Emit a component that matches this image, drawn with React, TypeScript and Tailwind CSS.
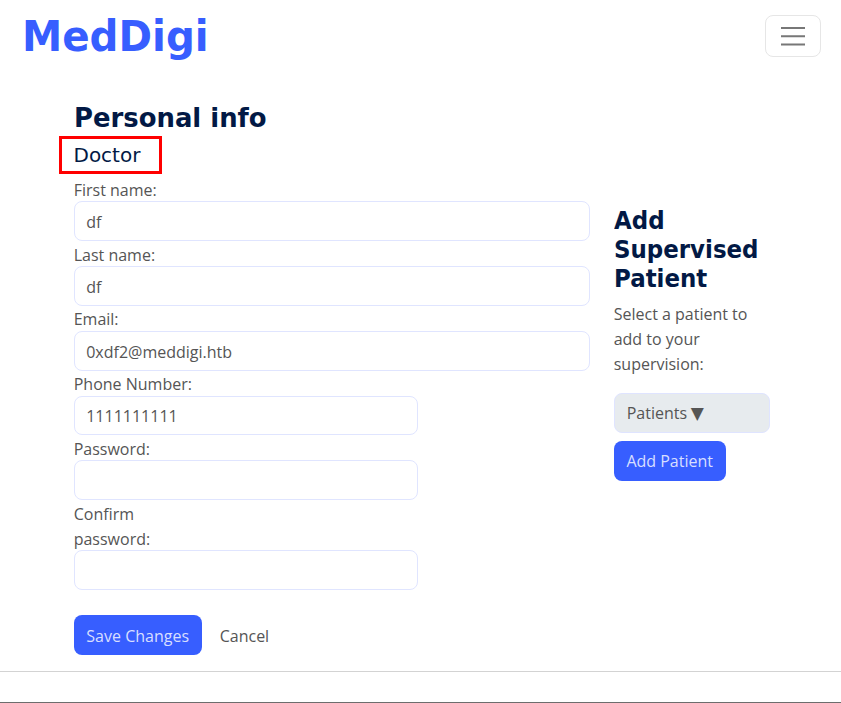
const heading = "font-['DejaVu_Sans',sans-serif] text-[#021945]";
const box = "block h-[39.8px] rounded-lg border border-[#e0e5ff] bg-white px-[11.5px] pt-[2px] outline-none";

function Field({ label, value = "", narrow = false, wrap = false, type = "text" }: {
  label: string; value?: string; narrow?: boolean; wrap?: boolean; type?: string;
}) {
  return (
    <label className="block">
      <span className={wrap ? "-mb-[1.5px] block w-[100px] pt-[1.5px]" : "-mb-[1.5px] block pt-[1.5px]"}>{label}</span>
      <input type={type} defaultValue={value} className={`${box} ${narrow ? "w-[344px]" : "w-full"}`} />
    </label>
  );
}

export default function App() {
  return (
    <div className="h-[703px] overflow-hidden bg-white font-['Open_Sans','Noto_Sans',sans-serif] text-[16px] leading-[24.95px] text-[#555] flex flex-col border-b border-[#6d6d6d]">
      <header className="flex h-[72px] shrink-0 items-center justify-between pl-[21.5px] pr-5">
        <a className="origin-left scale-x-[0.962] pt-px font-['DejaVu_Sans',sans-serif] text-[42px] leading-[50px] font-bold text-[#375eff]">MedDigi</a>
        <button aria-label="Menu" className="flex h-[42px] w-14 items-center justify-center rounded-lg border border-[#e6e6e6]">
          <svg width="24" height="20" viewBox="0 0 24 20" stroke="#777" strokeWidth="2">
            <path d="M0 2H24M0 10.2H24M0 18.4H24" />
          </svg>
        </button>
      </header>
      <main className="flex h-[599px] shrink-0 pl-[73.7px] pt-[29px]">
        <form className="w-[516px]">
          <h1 className={`${heading} h-[33px] origin-left scale-x-[0.945] text-[27.4px] leading-[33px] font-bold whitespace-nowrap`}>Personal info</h1>
          <div className="-ml-[14.4px] mt-[1.5px] mb-[2.3px] flex h-[38.5px] w-[103px] items-center border-[3px] border-[#f00] pl-[11.2px]">
            <h2 className={`${heading} pt-[1.5px] text-[20px]`}>Doctor</h2>
          </div>
          <Field label="First name:" value="df" />
          <Field label="Last name:" value="df" />
          <Field label="Email:" value="0xdf2@meddigi.htb" />
          <Field label="Phone Number:" value="1111111111" narrow />
          <Field label="Password:" type="password" narrow />
          <Field label="Confirm password:" type="password" narrow wrap />
          <div className="mt-[25.2px] flex items-center">
            <button type="button" className="h-[39.8px] w-32 rounded-lg bg-[#375eff] pt-[3px] text-[#d7dfff]">Save Changes</button>
            <a className="ml-[18px] pt-[3px]">Cancel</a>
          </div>
        </form>
        <aside className="ml-6 w-[156px] pt-[106px]">
          <h2 className={`${heading} origin-left scale-x-[0.955] text-[24px] leading-[28.8px] font-bold`}>Add Supervised Patient</h2>
          <p className="mt-[9px]">Select a patient to add to your supervision:</p>
          <button className="mt-4 block h-10 w-full rounded-lg border border-[#dfe4ff] bg-[#e7ebee] px-3 text-left">
            Patients <span className="-ml-[0.5px] inline-block font-['DejaVu_Sans',sans-serif] text-[17px] leading-4">▼</span>
          </button>
          <button className="mt-2 h-10 w-28 rounded-lg bg-[#375eff] text-[#d7dfff]">Add Patient</button>
        </aside>
      </main>
      <footer className="flex-1 border-t border-[#d3d3d3]" />
    </div>
  );
}
